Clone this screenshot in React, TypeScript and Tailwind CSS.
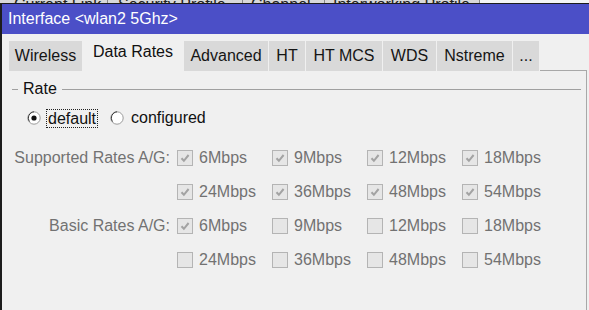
import type { ReactNode } from "react";

const tabs = [
  { label: "Wireless", w: "w-[73px]" },
  { label: "Data Rates", w: "w-[100px]", active: true },
  { label: "Advanced", w: "w-[84px]" },
  { label: "HT", w: "w-[36px]" },
  { label: "HT MCS", w: "w-[76px]" },
  { label: "WDS", w: "w-[53px]" },
  { label: "Nstreme", w: "w-[75px]" },
  { label: "...", w: "w-[26px]" },
];

const rates = ["6Mbps", "9Mbps", "12Mbps", "18Mbps", "24Mbps", "36Mbps", "48Mbps", "54Mbps"];

function Check({ checked }: { checked: boolean }) {
  return (
    <span className="flex h-[16px] w-[16px] shrink-0 items-center justify-center border border-[#b4b4b4] bg-[#e6e6e6]">
      {checked && (
        <svg width="12" height="12" viewBox="0 0 12 12" fill="none">
          <path d="M2.5 6.2l2.4 2.6 4.7-5.8" stroke="#a3a3a3" strokeWidth="2" />
        </svg>
      )}
    </span>
  );
}

function Radio({ on }: { on: boolean }) {
  return (
    <svg width="14" height="14" viewBox="0 0 14 14" className="shrink-0">
      <circle cx="7" cy="7" r="6.2" fill="#fff" stroke="#9a9a9a" strokeWidth="1" />
      <path d="M2.5 10.5A6.2 6.2 0 0 1 7 0.8" stroke="#3a3a3a" strokeWidth="1" fill="none" />
      {on && <circle cx="7" cy="7" r="2.6" fill="#111" />}
    </svg>
  );
}

function RateRow({ label, checked }: { label?: string; checked: boolean[] }) {
  return (
    <div className="flex h-[24px] items-center">
      <div className="w-[169px] pr-[1px] text-right text-[#727272]">{label}</div>
      <div className="ml-[6px] grid grid-cols-[95px_95px_95px_95px]">
        {checked.map((c, i) => (
          <div key={i} className="flex items-center">
            <Check checked={c} />
            <span className="ml-[6px] text-[#727272]">{label ? rates[i] : rates[i + 4]}</span>
          </div>
        ))}
      </div>
    </div>
  );
}

function Row({ children }: { children: ReactNode }) {
  return <div className="mt-[10px]">{children}</div>;
}

export default function App() {
  return (
    <div className="h-[310px] w-[589px] overflow-hidden bg-[#f0f0f0] font-['Liberation_Sans',Arial,sans-serif] text-[16px] leading-[18px] text-[#111]">
      {/* window behind */}
      <div className="flex h-[3px] overflow-hidden bg-[#d8d8d8] text-[#222]">
        <div className="w-[108px] border-r border-[#888] pl-[14px]"><div className="-mt-[4px] whitespace-nowrap">Current Link</div></div>
        <div className="w-[135px] border-r border-[#888] pl-[10px]"><div className="-mt-[4px] whitespace-nowrap">Security Profile</div></div>
        <div className="w-[82px] border-r border-[#888] pl-[8px]"><div className="-mt-[4px] whitespace-nowrap">Channel</div></div>
        <div className="w-[155px] border-r border-[#888] pl-[8px]"><div className="-mt-[4px] whitespace-nowrap">Interworking Profile</div></div>
        <div className="flex-1 bg-[#f4f4f4]" />
      </div>

      <div className="flex h-[307px] flex-col border-l-2 border-[#1c1c1c]">
        <div className="flex h-[31px] items-center border-t border-[#1c1c1c] bg-[#4b4fc7] pl-[6px] text-white">
          Interface &lt;wlan2 5Ghz&gt;
        </div>

        <div className="flex h-[37px] items-end pl-[7px]">
          {tabs.map((t) => (
            <div
              key={t.label}
              className={
                t.active
                  ? `${t.w} mr-[1px] flex h-[37px] items-center justify-center bg-[#f0f0f0] pb-[2px]`
                  : `${t.w} mr-[1px] flex h-[30px] items-center justify-center bg-[#d9d9d9] text-[#151515]`
              }
            >
              {t.label}
            </div>
          ))}
          <div className="mr-[2px] h-[1px] flex-1 bg-[#a8a8a8]" />
        </div>

        <div className="mr-[2px] flex-1 border-r border-[#a8a8a8] pt-[9px]">
          <div className="flex items-center">
            <div className="ml-[10px] h-px w-[6px] bg-[#a0a0a0]" />
            <span className="ml-[5px]">Rate</span>
            <div className="ml-[5px] mr-[5px] h-px flex-1 bg-[#a0a0a0]" />
          </div>

          <div className="mt-[10px] flex h-[20px] items-center pl-[25px]">
            <Radio on />
            <span className="ml-[5px] border border-dotted border-[#222] px-[1px] leading-[17px]">default</span>
            <span className="ml-[12px]"><Radio on={false} /></span>
            <span className="ml-[7px]">configured</span>
          </div>

          <div className="mt-[18px]">
            <RateRow label="Supported Rates A/G:" checked={[true, true, true, true]} />
            <Row><RateRow checked={[true, true, true, true]} /></Row>
            <Row><RateRow label="Basic Rates A/G:" checked={[true, false, false, false]} /></Row>
            <Row><RateRow checked={[false, false, false, false]} /></Row>
          </div>
        </div>
      </div>
    </div>
  );
}
